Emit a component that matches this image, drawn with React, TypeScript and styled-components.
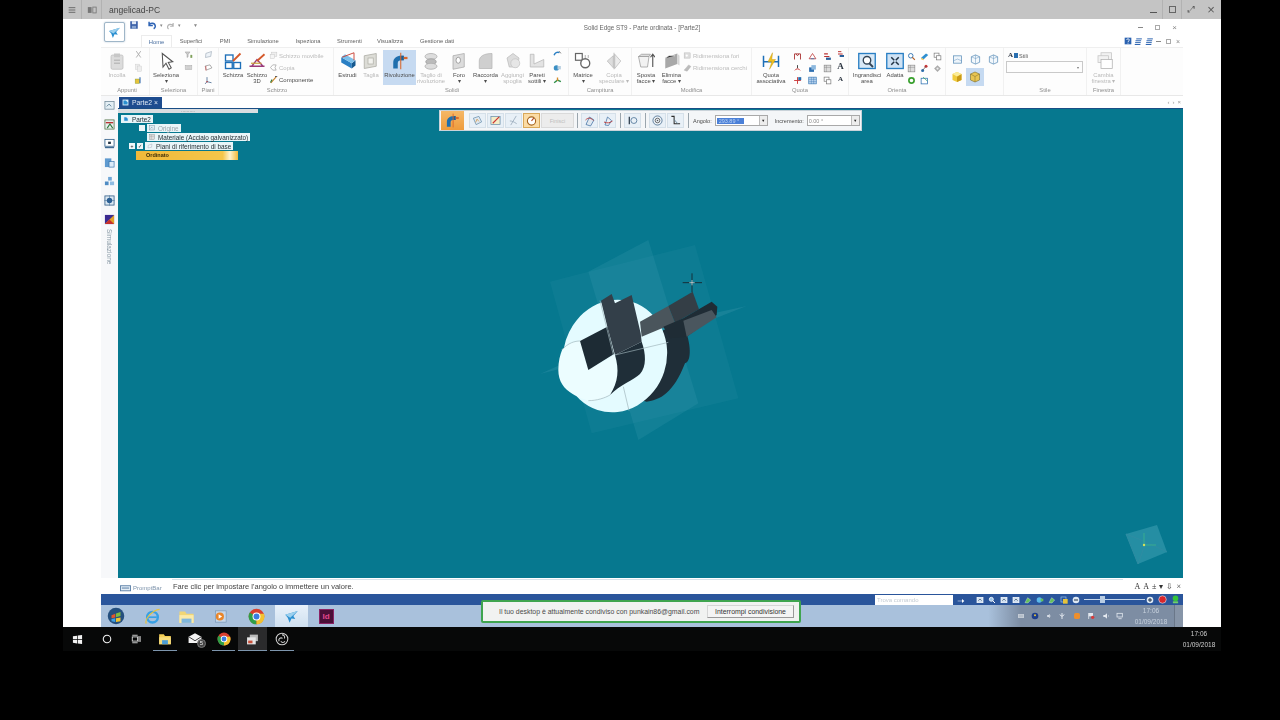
import { ReactNode } from 'react';
import styled, { createGlobalStyle } from 'styled-components';

const GlobalStyle = createGlobalStyle`
* { box-sizing: border-box; }
html, body { margin: 0; padding: 0; background: #000; }
body { width: 1280px; height: 720px; overflow: hidden; font-family: "Liberation Sans", Arial, sans-serif; }
`;

const glyphs: Record<string, ReactNode> = {
  clipboard: <><rect x="4" y="4" width="16" height="19" rx="2" fill="#dcdcdc" stroke="#bcbcbc" /><rect x="8" y="2" width="8" height="5" fill="#c8c8c8" /><path d="M8 11h8M8 15h8" stroke="#bbb" strokeWidth="2" /></>,
  scissors: <path d="M6 3l12 17M18 3L6 20" stroke="#aaa" strokeWidth="2.4" fill="none" />,
  copy: <><rect x="4" y="3" width="11" height="14" fill="#eee" stroke="#c4c4c4" /><rect x="9" y="8" width="11" height="14" fill="#eee" stroke="#c4c4c4" /></>,
  brush: <><rect x="3" y="8" width="12" height="12" fill="#e6c33a" stroke="#7a9a3a" /><path d="M16 3v16" stroke="#3a6fb0" strokeWidth="3" /></>,
  cursor: <path d="M7 2l1 18 4-5 4 8 3-2-4-7 6-1z" fill="#fff" stroke="#555" strokeWidth="1.4" />,
  selectA: <><path d="M3 5h13l-5 7v6l-3 2v-8z" fill="#ccc" stroke="#888" /><path d="M17 13h5v8h-5z" fill="#7fa05a" /></>,
  selectB: <><rect x="3" y="6" width="18" height="12" fill="#ddd" stroke="#999" /><path d="M6 10h12M6 14h12" stroke="#aaa" /></>,
  planeA: <path d="M5 9l15-5-2 13-14 3z" fill="#eef3f8" stroke="#8a9aa8" strokeWidth="1.4" />,
  planeB: <><path d="M3 8l13-3 5 8-15 6z" fill="#fff" stroke="#666" strokeWidth="1.4" /><path d="M5 8v12" stroke="#c33" strokeWidth="1.6" /></>,
  planeC: <><path d="M8 3v12l-5 6M8 15l12 3" stroke="#3a5f8a" strokeWidth="2" fill="none" /><circle cx="8" cy="15" r="2" fill="#b33" /></>,
  sketch: <><rect x="2" y="4" width="10" height="8" fill="#fff" stroke="#1d6fb8" strokeWidth="1.8" /><rect x="2" y="14" width="9" height="8" fill="#fff" stroke="#1d6fb8" strokeWidth="1.8" /><rect x="13" y="14" width="9" height="8" fill="#fff" stroke="#1d6fb8" strokeWidth="1.8" /><path d="M12 12L22 2" stroke="#d4582a" strokeWidth="2.4" /></>,
  sketch3d: <><path d="M2 19h20M5 19l7-9 8 9" stroke="#9a3a7a" strokeWidth="1.8" fill="none" /><path d="M4 15h14" stroke="#c9a23a" strokeWidth="1.6" /><path d="M12 12L22 3" stroke="#d4582a" strokeWidth="2.4" /></>,
  sketchMove: <><rect x="7" y="3" width="14" height="11" fill="#eee" stroke="#bbb" /><rect x="3" y="9" width="12" height="11" fill="#f4f4f4" stroke="#bbb" /></>,
  sketchCopy: <path d="M4 12l6-7h9l-3 7 3 7h-9z" fill="#fff" stroke="#999" strokeWidth="1.8" />,
  component: <><path d="M5 21L19 5" stroke="#c9822a" strokeWidth="3" /><path d="M4 20l4-8" stroke="#2f7a3a" strokeWidth="3" /><path d="M16 4h6" stroke="#333" strokeWidth="2" /></>,
  extrude: <><path d="M3 7l14 8v7L3 14z" fill="#2a7fc4" /><path d="M17 15l5-4v7l-5 4z" fill="#15598f" /><path d="M3 7l5-4 14 8-5 4z" fill="#7cc0ea" /><path d="M4 7L20 1M20 1v10" stroke="#c63b2e" strokeWidth="1.2" fill="none" /></>,
  cut: <><path d="M3 5l16-3v17L3 22z" fill="#dcdcd6" stroke="#a8a8a0" /><rect x="8" y="8" width="7" height="8" fill="#f2f2ee" stroke="#b0b0a8" /></>,
  revolve: <><path d="M3 22v-8c0-6 5-9 10-9h4v6h-4c-2 0-4 1-4 4v7z" fill="#1f6fae" /><path d="M13 5h4v6h-4z" fill="#1b5f96" /><path d="M13 1v22" stroke="#d9662a" strokeWidth="1.4" /><path d="M17 8h5" stroke="#d9662a" strokeWidth="3" /></>,
  revolveCut: <><ellipse cx="12" cy="6" rx="8" ry="4" fill="#ddd" stroke="#aaa" /><ellipse cx="12" cy="13" rx="7" ry="4" fill="#bbb" stroke="#999" /><ellipse cx="12" cy="19" rx="8" ry="4" fill="#ddd" stroke="#aaa" /></>,
  hole: <><path d="M4 5l15-3v18L4 23z" fill="#dcdcdc" stroke="#aaa" /><ellipse cx="11" cy="11" rx="3" ry="4" fill="#fff" stroke="#888" /></>,
  round: <path d="M3 22V12C3 6 9 2 20 2v20z" fill="#cfcfcf" stroke="#b5b5b5" />,
  draft: <><path d="M4 8l8-6 8 6-2 12H7z" fill="#ddd" stroke="#bbb" /><circle cx="15" cy="15" r="6" fill="#e6e6e6" stroke="#c4c4c4" /></>,
  thin: <path d="M3 3h5v13l13-6v10H3z" fill="#e3e3e3" stroke="#b5b5b5" />,
  twist: <><path d="M3 14c2-7 8-9 14-7" stroke="#2a7fc4" strokeWidth="4" fill="none" /><path d="M16 3l5 6" stroke="#555" strokeWidth="2" /></>,
  tubes: <><circle cx="9" cy="13" r="7" fill="#3a8fc4" /><path d="M12 8h9v9h-9z" fill="#b9cfe0" /></>,
  helix: <><path d="M3 18l9-7 9 4" stroke="#2f8f4a" strokeWidth="3.6" fill="none" /><path d="M12 4v9" stroke="#d98a2a" strokeWidth="3.6" /></>,
  pattern: <><rect x="2" y="2" width="9" height="9" fill="#fff" stroke="#666" strokeWidth="1.6" /><circle cx="15" cy="15" r="6" fill="#fff" stroke="#666" strokeWidth="1.8" /><path d="M15 4v4M19 4v4" stroke="#999" /></>,
  mirror: <><path d="M3 12l8-7v16z" fill="#ddd" stroke="#bbb" /><path d="M13 3l8 9-8 10z" fill="#ececec" stroke="#bbb" /><path d="M12 1v22" stroke="#aaa" /></>,
  move: <><path d="M2 6h14l-2 14H5z" fill="#f2f2f2" stroke="#999" /><path d="M2 6l4-3h12l-2 3z" fill="#ddd" stroke="#999" /><path d="M21 20V4M18 7l3-4 3 4" stroke="#555" strokeWidth="1.5" fill="none" /></>,
  erase: <><path d="M3 8l16-6v14L3 22z" fill="#a8a8a8" /><path d="M19 2l3 3v13l-3-2z" fill="#d5d5d5" /><path d="M3 8l5-3h8" stroke="#eee" /></>,
  resizeA: <><rect x="3" y="5" width="16" height="14" fill="#ddd" stroke="#aaa" /><circle cx="10" cy="12" r="3" fill="#fff" /></>,
  resizeB: <path d="M3 19L15 5l6 4-10 13z" fill="#bcbcbc" stroke="#aaa" />,
  quota: <><path d="M2 5v15M22 5v15M2 13h20" stroke="#1d6fb8" strokeWidth="2" /><path d="M14 1L8 13h5l-3 10 8-13h-5z" fill="#f0c020" stroke="#c79a10" strokeWidth=".6" /></>,
  dimA: <path d="M4 20V5h16v15M8 5l4 5 4-5" stroke="#a33" strokeWidth="2.4" fill="none" />,
  dimB: <><path d="M5 17a8 8 0 0114 0" stroke="#c33" strokeWidth="2.4" fill="none" /><path d="M12 3v8" stroke="#333" strokeWidth="2.4" /></>,
  dimC: <><path d="M12 3v18M3 12h18" stroke="#c33" strokeWidth="2.4" /><rect x="14" y="3" width="8" height="8" fill="#2a6fb0" /></>,
  dimD: <><path d="M3 18L12 4l9 14z" fill="#fff" stroke="#b33" strokeWidth="2" /><path d="M7 18h10" stroke="#2a6fb0" strokeWidth="2" /></>,
  dimE: <><rect x="3" y="9" width="13" height="12" fill="#2f6fb0" /><rect x="9" y="3" width="12" height="12" fill="#8cb8de" /></>,
  dimF: <><rect x="2" y="3" width="20" height="18" fill="#b9d3ee" stroke="#2a6fb0" strokeWidth="1.6" /><path d="M2 9h20M2 15h20M9 3v18M15 3v18" stroke="#2a6fb0" /></>,
  dimH: <><path d="M3 5h10M3 12h14" stroke="#b33" strokeWidth="3" /><rect x="8" y="15" width="13" height="6" fill="#2a5f9a" /></>,
  zoomArea: <><rect x="1" y="2" width="22" height="20" fill="#d8e8f6" stroke="#2a7fc4" strokeWidth="1.8" /><circle cx="12" cy="11" r="5" fill="#fff" stroke="#345" strokeWidth="1.8" /><path d="M15 15l5 5" stroke="#345" strokeWidth="2.4" /></>,
  fit: <><rect x="1" y="2" width="22" height="20" fill="#cfe2f4" stroke="#2a7fc4" strokeWidth="1.8" /><path d="M7 7l4 4M17 7l-4 4M7 17l4-4M17 17l-4-4" stroke="#234" strokeWidth="2" /></>,
  lens: <><circle cx="10" cy="10" r="6" fill="#fff" stroke="#2a6fb0" strokeWidth="2.4" /><path d="M14 14l7 7" stroke="#b5622a" strokeWidth="3" /></>,
  slab: <><path d="M3 15l13-11 6 4-12 11z" fill="#2f8fd0" /><path d="M3 15l7 4v3l-7-3z" fill="#f0c040" /></>,
  frames: <><rect x="3" y="3" width="13" height="11" fill="#fff" stroke="#777" strokeWidth="1.8" /><rect x="9" y="10" width="12" height="11" fill="#fff" stroke="#777" strokeWidth="1.8" /></>,
  mapA: <><rect x="3" y="3" width="18" height="18" fill="#ddd" stroke="#777" strokeWidth="1.4" /><path d="M3 9h18M9 3v18" stroke="#777" /></>,
  mapB: <><circle cx="7" cy="17" r="4" fill="#2a6fb0" /><circle cx="16" cy="6" r="4" fill="#c33" /><path d="M7 17L16 6" stroke="#555" strokeWidth="2" /></>,
  diamond: <><path d="M12 3l9 9-9 9-9-9z" fill="#aaa" /><circle cx="12" cy="12" r="3" fill="#eee" /></>,
  spin: <path d="M5 12a7 7 0 1114 0 7 7 0 01-14 0z" fill="none" stroke="#39a02e" strokeWidth="4.4" />,
  note: <><rect x="3" y="6" width="17" height="15" fill="#fff" stroke="#2a6fb0" strokeWidth="2" /><path d="M8 3l11 10" stroke="#3a6" strokeWidth="2" /></>,
  viewA: <><rect x="3" y="4" width="18" height="16" fill="#eef5fb" stroke="#5a8db8" strokeWidth="1.6" /><path d="M3 15l9-4 9 4" stroke="#5a8db8" fill="none" /></>,
  viewB: <><path d="M12 2l9 4v12l-9 4-9-4V6z" fill="#f3f8fc" stroke="#5a8db8" strokeWidth="1.6" /><path d="M12 2v20M3 6l9 4 9-4" stroke="#5a8db8" fill="none" /></>,
  cubeGold: <><path d="M12 2l9 4v12l-9 4-9-4V6z" fill="#f0cb3c" /><path d="M12 11l9-5v12l-9 4z" fill="#c99a18" /><path d="M3 6l9-4 9 4-9 5z" fill="#fbec9a" /></>,
  cubeLine: <><path d="M12 2l9 4v12l-9 4-9-4V6z" fill="#e9c550" stroke="#7a6b2a" strokeWidth="1.2" /><path d="M12 11v11M3 6l9 5 9-5" stroke="#7a6b2a" fill="none" /></>,
  windows: <><rect x="8" y="1" width="14" height="9" fill="#f2f2f2" stroke="#c4c4c4" /><rect x="4" y="5" width="14" height="9" fill="#f2f2f2" stroke="#c4c4c4" /><rect x="8" y="10" width="15" height="12" fill="#fff" stroke="#b0b0b0" /></>,
  appLogo: <><path d="M2 9l20-6-7 8 3 5-6-1-3 7-3-8z" fill="#2a8fd0" /><path d="M2 9l8 5 12-11z" fill="#9cd0ee" /></>,
  save: <><rect x="3" y="3" width="18" height="18" fill="#3a5fa8" /><rect x="7" y="3" width="10" height="7" fill="#dfe8f4" /><rect x="7" y="14" width="10" height="7" fill="#8aa5cf" /></>,
  undo: <path d="M5 4v9h9M5 12c3-6 14-6 15 3 0 3-2 5-4 6" stroke="#2f64b5" strokeWidth="3.6" fill="none" />,
  redo: <path d="M19 5v9h-8M19 13c-3-6-14-6-15 3 0 2 1 4 3 5" stroke="#b5b5b5" strokeWidth="3.2" fill="none" />,
  help: <><rect x="2" y="2" width="20" height="20" fill="#2a62b0" /><path d="M8 9c0-5 8-5 8 0 0 3-4 3-4 6M12 17v3" stroke="#fff" strokeWidth="2.4" fill="none" /></>,
  lines: <path d="M6 5h15M4 10h15M3 15h15M2 20h15" stroke="#2a62b0" strokeWidth="2.6" />,
  part: <><rect x="2" y="2" width="20" height="20" fill="#dbeefa" /><path d="M5 5h8l6 6v8H5z" fill="#2a8fd0" /></>,
  railA: <><rect x="2" y="3" width="20" height="17" fill="#e3eef4" stroke="#6a8494" strokeWidth="1.6" /><path d="M6 14l5-5 5 5" stroke="#5b7f95" strokeWidth="2" fill="none" /></>,
  railB: <><rect x="2" y="2" width="20" height="20" fill="#e7eef0" stroke="#4a6a3a" strokeWidth="1.6" /><path d="M4 8h16" stroke="#b33" strokeWidth="3" /><path d="M7 20l6-9 6 9" stroke="#2f7a3a" strokeWidth="2.4" fill="none" /></>,
  railC: <><rect x="2" y="3" width="20" height="15" fill="#fff" stroke="#2f5f8a" strokeWidth="1.8" /><path d="M2 21h20" stroke="#2f5f8a" strokeWidth="2.4" /><rect x="9" y="8" width="6" height="5" fill="#234" /></>,
  railD: <><rect x="2" y="3" width="14" height="19" fill="#5f9ad0" /><rect x="11" y="10" width="11" height="12" fill="#dcebf7" stroke="#2f6fa8" strokeWidth="1.4" /></>,
  railE: <><rect x="9" y="2" width="8" height="8" fill="#6fa6d6" /><rect x="2" y="12" width="8" height="8" fill="#4f8cc4" /><rect x="13" y="12" width="9" height="8" fill="#8fbce2" /></>,
  railF: <><rect x="2" y="2" width="20" height="20" fill="#dbe8f2" stroke="#35618a" strokeWidth="1.8" /><circle cx="12" cy="12" r="6" fill="#2a5f96" /><path d="M12 1v22M1 12h22" stroke="#35618a" /></>,
  railG: <><rect x="2" y="2" width="20" height="20" fill="#3a2a90" /><path d="M2 22L22 2v20z" fill="#e0a02a" /><path d="M2 22l10-10 10 10z" fill="#c62e2e" /></>,
  plane3d: <><path d="M3 7l12-4 6 12-12 6z" fill="#dfe8f0" stroke="#5f87a8" strokeWidth="1.5" /><path d="M8 16l3-7 4 5" stroke="#d08a2a" strokeWidth="1.4" fill="none" /></>,
  pencil: <><rect x="2" y="3" width="20" height="18" fill="#f3edc8" stroke="#5f87a8" strokeWidth="1.5" /><path d="M6 18L20 4" stroke="#c33" strokeWidth="2.4" /></>,
  stair: <path d="M6 22L18 2M4 13c5 0 9 2 15 6" stroke="#9ab" strokeWidth="1.8" fill="none" />,
  gauge: <><circle cx="12" cy="13" r="9" fill="#fff" stroke="#a5651f" strokeWidth="2.4" /><path d="M12 13l5-6" stroke="#b5481f" strokeWidth="2.4" /></>,
  rotA: <><path d="M4 19l7-15 9 6-7 12z" fill="#dfe8f0" stroke="#4a77a8" strokeWidth="1.6" /><path d="M3 10c5-5 10-5 16 1" stroke="#b53a3a" strokeWidth="1.8" fill="none" /></>,
  rotB: <><path d="M6 20l5-16 8 7-6 10z" fill="#ecf1f6" stroke="#4a77a8" strokeWidth="1.6" /><path d="M4 14c6 3 12 2 17-2" stroke="#b53a3a" strokeWidth="1.8" fill="none" /></>,
  axis: <><path d="M5 4v16" stroke="#234" strokeWidth="2.6" /><circle cx="15" cy="12" r="6.5" fill="none" stroke="#4d7396" strokeWidth="1.8" /></>,
  target: <><circle cx="12" cy="12" r="10" fill="none" stroke="#4d6f8f" strokeWidth="1.8" /><circle cx="12" cy="12" r="5" fill="none" stroke="#555" strokeWidth="1.8" /><circle cx="12" cy="12" r="1.6" fill="#555" /></>,
  profile: <><path d="M3 3h6v16h13" fill="none" stroke="#2b2b2b" strokeWidth="2.2" /><path d="M9 10l8 9" stroke="#5b7f95" strokeWidth="1.8" /></>,
  prompt: <><rect x="1" y="6" width="22" height="11" fill="#e4eef6" stroke="#5a7ea6" strokeWidth="2" /><path d="M4 11h16" stroke="#5a7ea6" strokeWidth="2.2" /></>,
  arrow: <path d="M2 14h13V9l7 6-7 6v-5H2z" fill="#fff" />,
  tinyBlue: <><rect x="3" y="4" width="18" height="16" fill="#cfe0f2" stroke="#fff" strokeWidth="2" /><path d="M7 14l5-5 5 5" stroke="#345" strokeWidth="2" fill="none" /></>,
  tinyLens: <><circle cx="10" cy="10" r="6" fill="#9cc6ec" stroke="#fff" strokeWidth="2.4" /><path d="M14 14l7 7" stroke="#fff" strokeWidth="3" /></>,
  tinyGreen: <path d="M3 20l8-15 9 7-8 9z" fill="#63c05a" stroke="#fff" />,
  tinyGlobe: <><circle cx="10" cy="12" r="8" fill="#5ab8ea" /><path d="M14 8h8v8h-8z" fill="#63c05a" /></>,
  tinyBox: <><rect x="3" y="3" width="15" height="15" fill="none" stroke="#9cc6ec" strokeWidth="2" /><rect x="9" y="9" width="14" height="14" fill="#e6c33a" /></>,
  minus: <><circle cx="12" cy="12" r="10" fill="#dde8f4" /><path d="M6 12h12" stroke="#234" strokeWidth="3" /></>,
  plus: <><circle cx="12" cy="12" r="10" fill="#dde8f4" /><path d="M6 12h12M12 6v12" stroke="#234" strokeWidth="3" /></>,
  red: <circle cx="12" cy="12" r="10" fill="#d8262c" stroke="#e5e9f2" strokeWidth="1.6" />,
  green: <><circle cx="12" cy="9" r="7.5" fill="#35c43a" /><rect x="5" y="17" width="14" height="5" fill="#6fd06a" /></>,
  orb: <><circle cx="12" cy="12" r="11" fill="#244f7e" /><path d="M6 11l5-2v5l-5 1z" fill="#e2572b" /><path d="M12 8.5l6-2V12l-6 1.5z" fill="#7fbb3f" /><path d="M6 16l5-1v5l-5-1z" fill="#3fa0e2" /><path d="M12 15l6-1v5l-6 1z" fill="#f0c330" /></>,
  ie: <><circle cx="12" cy="13" r="7.5" fill="none" stroke="#37a0e6" strokeWidth="3.4" /><path d="M6 13h12" stroke="#37a0e6" strokeWidth="2.4" /><path d="M3 22C1 15 12 3 22 2" stroke="#e9c23a" strokeWidth="1.6" fill="none" /></>,
  folder: <><path d="M2 5h8l2 3h10v13H2z" fill="#f1d675" /><rect x="2" y="10" width="20" height="11" fill="#fbeaa8" /><rect x="5" y="15" width="14" height="6" fill="#7fb6dd" /></>,
  media: <><rect x="4" y="3" width="17" height="18" fill="#c5d6e8" stroke="#7393b5" /><circle cx="11" cy="12" r="6.5" fill="#e8852a" /><path d="M9 8.5l5.5 3.5L9 15.5z" fill="#fff" /></>,
  chrome: <><circle cx="12" cy="12" r="11" fill="#d9402e" /><path d="M12 12L2.4 6.5A11 11 0 0012 23z" fill="#2f9e47" /><path d="M12 12v11A11 11 0 0022.5 8H12z" fill="#f3c22f" /><circle cx="12" cy="12" r="5.6" fill="#fff" /><circle cx="12" cy="12" r="4.2" fill="#3b7de0" /></>,
  winLogo: <path d="M2 5l9-1.4V11.5H2zM12.5 3.400L22 2v9.5h-9.500zM2 13h9v7.5L2 19zM12.5 13H22v9l-9.500-1.400z" fill="#f2f2f2" />,
  ring: <circle cx="12" cy="12" r="9" fill="none" stroke="#f2f2f2" strokeWidth="2.6" />,
  taskview: <><rect x="3" y="7" width="13" height="10" fill="none" stroke="#eee" strokeWidth="2" /><path d="M19 5v14M22 5v14M3 3h13M3 21h13" stroke="#eee" strokeWidth="2" /></>,
  explorer: <><path d="M2 4h8l2 3h10v14H2z" fill="#f2cd55" /><rect x="2" y="9" width="20" height="12" fill="#f6dc7c" /><rect x="7" y="14" width="10" height="7" fill="#4c9ed6" /></>,
  mail: <><path d="M1 8l11-6 11 6v11H1z" fill="#f3f3f3" /><path d="M1 8l11 7 11-7" stroke="#333" strokeWidth="1.6" fill="none" /></>,
  gallery: <><rect x="7" y="3" width="15" height="12" fill="#bbb" /><rect x="2" y="8" width="16" height="13" fill="#e6e6e6" /><rect x="4" y="14" width="8" height="5" fill="#c9503a" /></>,
  obs: <><circle cx="12" cy="12" r="10" fill="none" stroke="#cfcfcf" strokeWidth="1.8" /><path d="M12 5a4 4 0 014 6M7 16a4 4 0 016-5M17 16a4 4 0 01-7 0" stroke="#cfcfcf" strokeWidth="1.8" fill="none" /></>,
  menu: <path d="M2 5h20M2 12h20M2 19h20" stroke="#555" strokeWidth="2.4" />,
  viewerSwap: <><rect x="2" y="5" width="9" height="14" fill="#777" /><rect x="14" y="5" width="8" height="14" fill="none" stroke="#777" strokeWidth="2" /></>,
  traySmall: <><rect x="3" y="6" width="18" height="12" fill="#c4ccd6" /><path d="M6 10h12M6 14h12" stroke="#8c98a6" /></>,
  trayBlue: <><circle cx="12" cy="12" r="10" fill="#1f3f8a" /><circle cx="12" cy="10" r="3" fill="#e6c33a" /></>,
  trayOrange: <rect x="3" y="3" width="18" height="18" rx="5" fill="#ef8f2c" />,
  trayFlag: <><path d="M5 3v18" stroke="#e3e8ef" strokeWidth="2.4" /><path d="M5 3h13v10H5z" fill="#e3e8ef" /><circle cx="17" cy="16" r="5" fill="#d83a3a" /></>,
  traySound: <path d="M4 9h5l6-5v16l-6-5H4zM18 8c2 2 2 6 0 8" fill="#e3e8ef" />,
  trayNet: <><rect x="3" y="4" width="16" height="11" fill="none" stroke="#e3e8ef" strokeWidth="2.4" /><path d="M7 20h10" stroke="#e3e8ef" strokeWidth="2.4" /></>,
  trayUsb: <path d="M12 3v18M5 8l7 5 7-5" stroke="#e3e8ef" strokeWidth="3" fill="none" />,
};

const Svg = styled.svg<{ $size: number; $faded?: boolean }>`
display: block;
flex: none;
width: ${(p) => p.$size}px;
height: ${(p) => p.$size}px;
opacity: ${(p) => (p.$faded ? 0.55 : 1)};
`;

function Glyph({ name, size = 9, faded }: { name: string, size?: number, faded?: boolean }) {
  return <Svg $size={size} $faded={faded} viewBox="0 0 24 24">{glyphs[name]}</Svg>;
}

const Screen = styled.div`
margin-left: 63px;
width: 1158px;
height: 651px;
display: flex;
flex-direction: column;
filter: blur(0.5px);
`;

const ViewerBar = styled.div`
height: 19px;
flex: none;
background: #c4c4c4;
display: flex;
align-items: center;
`;

const ViewerCell = styled.div<{ $w: number, $line?: boolean }>`
width: ${(p) => p.$w}px;
height: 19px;
flex: none;
display: flex;
align-items: center;
justify-content: center;
border-right: ${(p) => (p.$line ? '1px solid #b2b2b2' : 'none')};
color: #5a5a5a;
font-size: 13px;
`;

const ResizeCell = styled(ViewerCell)`
font-size: 9px;
`;

const ViewerName = styled.div`
flex: 1;
padding-left: 7px;
font-size: 8.5px;
color: #444;
`;

const MinLine = styled.span`
width: 7px;
height: 1px;
margin-top: 5px;
background: #555;
`;

const MaxBox = styled.span`
width: 7px;
height: 7px;
border: 1px solid #666;
`;

const Desktop = styled.div`
position: relative;
height: 608px;
flex: none;
display: flex;
background: #fff;
padding: 0 38px;
`;

const AppWindow = styled.div`
width: 1082px;
display: flex;
flex-direction: column;
position: relative;
background: #fff;
`;

const TitleRow = styled.div`
height: 16px;
flex: none;
display: grid;
grid-template-columns: 1fr auto 1fr;
align-items: center;
`;

const QuickAccess = styled.div`
display: flex;
align-items: center;
gap: 3px;
padding: 0 0 4px 28px;
color: #888;
font-size: 5px;
`;

const QuickGap = styled.span<{ $w: number }>`
width: ${(p) => p.$w}px;
`;

const Title = styled.div`
font-size: 6.3px;
color: #666;
`;

const CloseSet = styled.div`
display: flex;
justify-content: flex-end;
align-items: center;
gap: 12px;
padding: 0 6px 0 0;
color: #888;
font-size: 8px;
`;

const MiniCloseSet = styled.div`
display: flex;
align-items: center;
gap: 5px;
color: #888;
font-size: 7px;
`;

const SmallMin = styled.span`
width: 5px;
height: 1px;
background: #888;
`;

const SmallRestore = styled.span`
width: 5px;
height: 5px;
border: 1px solid #aaa;
`;

const AppButton = styled.div`
position: absolute;
left: 3px;
top: 3px;
width: 21px;
height: 20px;
background: #fff;
border: 1px solid #9fb6c8;
border-radius: 2px;
display: flex;
align-items: center;
justify-content: center;
box-shadow: 0 0 2px #b5c5d4;
`;

const TabRow = styled.div`
height: 12px;
flex: none;
display: flex;
align-items: stretch;
padding-left: 40px;
`;

const Tab = styled.div<{ $w: number, $active?: boolean }>`
width: ${(p) => p.$w}px;
display: flex;
align-items: center;
justify-content: center;
font-size: 5.8px;
color: #5f5f5f;
background: #fff;
${(p) => p.$active && 'border: 1px solid #ececec; border-bottom: none; color: #4a6fa0;'}
`;

const HelpSet = styled.div`
margin-left: auto;
display: flex;
align-items: center;
gap: 2px;
padding-right: 3px;
`;

const Ribbon = styled.div`
height: 49px;
flex: none;
display: flex;
border-top: 1px solid #efefef;
border-bottom: 1px solid #e8e8e8;
background: #fdfdfd;
`;

const Group = styled.div<{ $w: number, $pad?: number }>`
width: ${(p) => p.$w}px;
flex: none;
display: flex;
flex-direction: column;
padding-left: ${(p) => p.$pad ?? 0}px;
border-right: 1px solid #f1f1f1;
`;

const GroupBody = styled.div`
height: 38px;
flex: none;
display: flex;
align-items: flex-start;
padding-top: 2px;
`;

const GroupLabel = styled.div`
height: 8px;
text-align: center;
font-size: 5.8px;
line-height: 8px;
color: #8d8d8d;
`;

const BigTool = styled.div<{ $w: number, $off?: boolean, $active?: boolean }>`
width: ${(p) => p.$w}px;
height: 35px;
flex: none;
display: flex;
flex-direction: column;
align-items: center;
padding-top: 2px;
gap: 2px;
font-size: 5.9px;
line-height: 6px;
text-align: center;
color: ${(p) => (p.$off ? '#b9b9b9' : '#4c4c4c')};
background: ${(p) => (p.$active ? '#c6daf1' : 'transparent')};
`;

const SmallColumn = styled.div<{ $w: number }>`
width: ${(p) => p.$w}px;
flex: none;
display: flex;
flex-direction: column;
align-items: center;
gap: 4px;
`;

const LabelColumn = styled.div<{ $w: number }>`
width: ${(p) => p.$w}px;
flex: none;
display: flex;
flex-direction: column;
gap: 3px;
padding-top: 1px;
`;

const LabelTool = styled.div<{ $off?: boolean }>`
display: flex;
align-items: center;
gap: 1px;
font-size: 6px;
color: ${(p) => (p.$off ? '#bcbcbc' : '#4c4c4c')};
white-space: nowrap;
`;

const IconGrid = styled.div<{ $cols: number, $cell: number, $row?: number }>`
display: grid;
grid-template-columns: repeat(${(p) => p.$cols}, ${(p) => p.$cell}px);
grid-auto-rows: ${(p) => p.$row ?? 12}px;
justify-items: center;
align-items: center;
flex: none;
`;

const ViewCell = styled.div<{ $active?: boolean }>`
width: 18px;
height: 18px;
display: flex;
align-items: center;
justify-content: center;
background: ${(p) => (p.$active ? '#c6daf1' : 'transparent')};
`;

const FontIcon = styled.span<{ $size: number }>`
font-family: "Liberation Serif", serif;
font-weight: 700;
font-size: ${(p) => p.$size}px;
line-height: 9px;
height: 9px;
color: #2b3440;
`;

const StyleColumn = styled.div`
flex: 1;
display: flex;
flex-direction: column;
gap: 1px;
padding: 1px 3px 0 2px;
font-size: 5.5px;
color: #555;
`;

const StyleName = styled.div`
display: flex;
align-items: center;
gap: 1px;
padding-left: 2px;
`;

const StyleSwatch = styled.span`
width: 4px;
height: 5px;
background: #2a6fb0;
`;

const StyleSelect = styled.div`
height: 12px;
border: 1px solid #c9c9c9;
display: flex;
align-items: center;
justify-content: flex-end;
padding-right: 3px;
color: #777;
font-size: 4px;
`;

const Main = styled.div`
flex: 1;
min-height: 0;
display: flex;
`;

const Rail = styled.div`
width: 17px;
flex: none;
display: flex;
flex-direction: column;
align-items: center;
padding-top: 4px;
gap: 8px;
background: #f7f8fa;
`;

const RailText = styled.div`
writing-mode: vertical-rl;
font-size: 6.5px;
color: #8a9aa6;
margin-top: -4px;
`;

const Workspace = styled.div`
flex: 1;
min-width: 0;
display: flex;
flex-direction: column;
`;

const DocRow = styled.div`
height: 13px;
flex: none;
display: flex;
align-items: flex-end;
justify-content: space-between;
padding-left: 1px;
border-bottom: 1px solid #1a4e86;
`;

const DocTab = styled.div`
width: 43px;
height: 11px;
background: #1d4c8f;
color: #dfe9f5;
font-size: 6.8px;
display: flex;
align-items: center;
gap: 3px;
padding-left: 3px;
white-space: nowrap;
`;

const DocArrows = styled.div`
display: flex;
align-items: center;
gap: 3px;
padding: 0 2px 3px 0;
color: #999;
font-size: 6px;
`;

const Viewport = styled.div`
position: relative;
flex: 1;
min-height: 0;
background: #06788f;
`;

const TreeGrip = styled.div`
position: absolute;
left: 0;
top: 0;
width: 140px;
height: 4px;
background: #d9dde0;
color: #777;
font-size: 5px;
line-height: 2px;
text-align: center;
`;

const Tree = styled.div`
position: absolute;
left: 3px;
top: 6px;
display: flex;
flex-direction: column;
gap: 0.5px;
`;

const TreeRow = styled.div<{ $indent: number }>`
height: 8.5px;
display: flex;
align-items: center;
gap: 2px;
padding-left: ${(p) => p.$indent}px;
`;

const TreeLabel = styled.div<{ $muted?: boolean }>`
height: 8px;
display: flex;
align-items: center;
gap: 3px;
padding: 0 2px;
background: #e9f5f8;
font-size: 6.4px;
white-space: nowrap;
color: ${(p) => (p.$muted ? '#9aa6ac' : '#1f2a30')};
`;

const TreeBox = styled.div`
width: 6px;
height: 6px;
background: #eef6f8;
color: #222;
font-size: 5px;
line-height: 6px;
text-align: center;
`;

const TreeActive = styled.div`
width: 102px;
height: 9px;
margin-left: 15px;
padding-left: 10px;
background: linear-gradient(90deg, #f0b93a 0, #f4c64a 85%, #fdf3cf 92%, #f0b93a 100%);
font-size: 5.5px;
font-weight: 700;
line-height: 9px;
color: #3c2c06;
`;

const CommandBar = styled.div`
position: absolute;
left: 321px;
top: 1px;
width: 423px;
height: 21px;
background: #f4f6f8;
border: 1px solid #c9d2d9;
display: flex;
align-items: center;
padding-left: 1px;
font-size: 5.5px;
color: #4a4a4a;
`;

const CommandMain = styled.div`
width: 23px;
height: 19px;
flex: none;
display: flex;
align-items: center;
justify-content: center;
background: linear-gradient(#f5b867, #ee9b3c);
margin-right: 5px;
`;

const CommandTool = styled.div<{ $hot?: boolean }>`
width: 17px;
height: 15px;
flex: none;
margin-right: 1px;
display: flex;
align-items: center;
justify-content: center;
border: 1px solid ${(p) => (p.$hot ? '#d9a95a' : '#d5e0e9')};
background: ${(p) => (p.$hot ? '#fbdca6' : '#e8f0f7')};
`;

const FinishButton = styled.div`
width: 33px;
height: 15px;
flex: none;
display: flex;
align-items: center;
justify-content: center;
background: #ececec;
border: 1px solid #dadada;
color: #bdbdbd;
`;

const CommandSep = styled.div`
width: 1px;
height: 15px;
flex: none;
margin: 0 3px;
background: #9aa5ad;
`;

const FieldLabel = styled.div`
flex: none;
padding: 0 3px 0 1px;
white-space: nowrap;
`;

const FieldSelect = styled.div`
width: 53px;
height: 11px;
flex: none;
margin-right: 6px;
background: #fff;
border: 1px solid #a9a9a9;
display: flex;
align-items: center;
justify-content: space-between;
padding-left: 1px;
color: #8b8b8b;
`;

const SelectedValue = styled.span`
background: #4a80d8;
color: #bcd2f2;
padding: 0 5px 0 2px;
`;

const FieldArrow = styled.span`
width: 8px;
height: 9px;
background: #ededed;
border-left: 1px solid #bbb;
color: #222;
font-size: 4px;
line-height: 9px;
text-align: center;
`;

const ModelSvg = styled.svg`
position: absolute;
left: 402px;
top: 121px;
width: 240px;
height: 215px;
`;

const TriadSvg = styled.svg`
position: absolute;
left: 1007px;
top: 416px;
width: 42px;
height: 40px;
`;

const PromptRow = styled.div`
height: 16px;
flex: none;
display: flex;
align-items: flex-end;
background: #fff;
padding-left: 19px;
`;

const PromptName = styled.div`
width: 52px;
height: 12px;
flex: none;
display: flex;
align-items: center;
gap: 2px;
font-size: 6px;
color: #7d93ab;
`;

const PromptInput = styled.div`
flex: 1;
height: 15px;
padding-left: 1px;
border-top: 1.5px solid #d6e2ea;
font-size: 7.5px;
line-height: 14px;
color: #444;
`;

const PromptTools = styled.div`
width: 60px;
height: 14px;
flex: none;
display: flex;
align-items: flex-start;
justify-content: flex-end;
gap: 3px;
padding-right: 2px;
color: #333;
font-size: 8px;
line-height: 14px;
font-family: "Liberation Serif", serif;
`;

const StatusBar = styled.div`
height: 11px;
flex: none;
display: flex;
align-items: center;
justify-content: flex-end;
gap: 4px;
padding-right: 3px;
background: #2a559b;
`;

const SearchField = styled.div`
width: 78px;
height: 10px;
flex: none;
background: #fff;
color: #c4ccd4;
font-size: 6px;
line-height: 10px;
padding-left: 2px;
`;

const StatusSpacer = styled.span`
width: 3px;
flex: none;
`;

const ZoomTrack = styled.div`
position: relative;
width: 61px;
height: 1px;
flex: none;
margin-right: -3px;
background: #c5d6ea;
`;

const ZoomThumb = styled.div`
position: absolute;
left: 16px;
top: -3px;
width: 5px;
height: 7px;
background: #b9cde3;
`;

const SevenBar = styled.div`
height: 22px;
flex: none;
display: flex;
align-items: center;
background: linear-gradient(90deg, #a9c1dc 0, #a9c1dc 82%, #7d8da3 85%, #7d8da3 100%);
`;

const SevenItem = styled.div<{ $w: number, $active?: boolean }>`
width: ${(p) => p.$w}px;
height: 22px;
flex: none;
display: flex;
align-items: center;
justify-content: center;
background: ${(p) => (p.$active ? 'linear-gradient(#e8f1fa, #cfe0f0)' : 'transparent')};
`;

const IdBadge = styled.div`
width: 15px;
height: 15px;
background: #4a0f37;
border: 1px solid #8a2364;
color: #e0488f;
font-size: 8px;
font-weight: 700;
line-height: 13px;
text-align: center;
`;

const SevenTray = styled.div`
margin-left: auto;
display: flex;
align-items: center;
height: 22px;
`;

const TrayIcons = styled.div`
display: flex;
align-items: center;
gap: 6.5px;
margin-right: 4px;
`;

const SevenClock = styled.div`
width: 46px;
font-size: 6.5px;
line-height: 11px;
text-align: center;
color: #c8d2de;
`;

const ShowDesktop = styled.div`
width: 9px;
height: 22px;
background: #8795a8;
border-left: 1px solid #6a7789;
`;

const TenBar = styled.div`
height: 24px;
flex: none;
display: flex;
align-items: center;
background: #070808;
`;

const TenItem = styled.div<{ $w: number, $line?: boolean, $active?: boolean }>`
position: relative;
width: ${(p) => p.$w}px;
height: 24px;
flex: none;
display: flex;
align-items: center;
justify-content: center;
background: ${(p) => (p.$active ? '#2b2b2c' : 'transparent')};
${(p) => p.$line && `
  &::after {
    content: '';
    position: absolute;
    left: ${p.$active ? 0 : 3}px;
    right: ${p.$active ? 0 : 3}px;
    bottom: 0;
    height: 1px;
    background: #7d95ad;
  }
`}
`;

const MailBadge = styled.span`
position: absolute;
right: 3px;
bottom: 3px;
width: 9px;
height: 9px;
border-radius: 50%;
background: #444;
border: 1px solid #777;
color: #eee;
font-size: 6px;
line-height: 7px;
text-align: center;
`;

const TenClock = styled.div`
margin-left: auto;
width: 44px;
font-size: 6.5px;
line-height: 11px;
text-align: center;
color: #cfcfcf;
`;

const ShareBanner = styled.div`
position: absolute;
left: 418px;
top: 581px;
width: 320px;
height: 23px;
display: flex;
align-items: center;
justify-content: space-between;
padding: 0 5px 0 16px;
background: #f1f2f1;
border: 2px solid #3fa44f;
border-radius: 2px;
font-size: 6.9px;
color: #4a4a4a;
`;

const ShareButton = styled.div`
width: 87px;
height: 13px;
display: flex;
align-items: center;
justify-content: center;
background: #f4f4f4;
border: 1px solid #d5d5d5;
border-right-color: #999;
border-bottom-color: #999;
color: #333;
`;

function Tool({ icon, size = 18, w, off, active, children }: { icon: string, size?: number, w: number, off?: boolean, active?: boolean, children: ReactNode }) {
  return (
    <BigTool $w={w} $off={off} $active={active}>
      <Glyph name={icon} size={size} />
      <div>{children}</div>
    </BigTool>
  );
}

function Icons({ cols, cell, names, size = 9 }: { cols: number, cell: number, names: string[], size?: number }) {
  return (
    <IconGrid $cols={cols} $cell={cell}>
      {names.map((name, i) => <Glyph key={`${name}${i}`} name={name} size={size} />)}
    </IconGrid>
  );
}

function Model() {
  return (
    <ModelSvg viewBox="0 0 720 645">
      <path d="M90 155L525 45l130 460-440 105z" fill="#4aa6ba" opacity=".11" />
      <path d="M205 125L385 30l150 490-180 110z" fill="#5ab0c2" opacity=".15" />
      <path d="M60 432L350 300l330-72-330 130z" fill="#7abfce" opacity=".15" />
      <path d="M430 300l60-15c25 55 25 110 5 115-35 90-75 110-115 115l-50-15z" fill="#1f2e38" />
      <ellipse cx="285" cy="378" rx="155" ry="170" transform="rotate(18 285 378)" fill="#e4fbff" />
      <path d="M127 358C150 338 170 333 180 333L205 420 285 375C298 420 295 455 270 495 250 505 225 515 205 512 150 495 115 470 115 420 115 395 120 375 127 358Z" fill="#ecfdff" />
      <path d="M285 375L365 335C378 370 380 410 360 432 340 450 300 465 270 495 295 455 298 420 285 375Z" fill="#1f2e38" />
      <path d="M180 333l82-43 20 82-77 48z" fill="#1d2b34" />
      <path d="M243 212l32-20 10 28 50-25 27 115 3 25-80 40-23-85z" fill="#333f49" />
      <path d="M360 275l85-47 20 50-100 42z" fill="#4a555c" />
      <path d="M445 228l73-43 19 53-72 40z" fill="#343e46" />
      <path d="M430 290l60-25 85-50 17 15-2 25-90 65-50 5z" fill="#1f2c35" />
      <path d="M490 272l85-32 15 22-90 58z" fill="#4a565e" />
      <path d="M240 212l40 163M310 470l17 72M125 360c20-22 40-27 55-27M285 375l160-38M205 512c25 0 50-8 65-17" stroke="#9fb3ba" strokeWidth="2" fill="none" />
      <path d="M516 130v56M488 158h58" stroke="#16303a" strokeWidth="3" />
      <path d="M516 150v16M508 158h16" stroke="#e8f4f6" strokeWidth="2" />
    </ModelSvg>
  );
}

function App() {
  return (
    <>
      <GlobalStyle />
      <Screen>
        <ViewerBar>
          <ViewerCell $w={19} $line><Glyph name="menu" size={8} /></ViewerCell>
          <ViewerCell $w={20} $line><Glyph name="viewerSwap" size={10} /></ViewerCell>
          <ViewerName>angelicad-PC</ViewerName>
          <ViewerCell $w={19} $line><MinLine /></ViewerCell>
          <ViewerCell $w={19} $line><MaxBox /></ViewerCell>
          <ResizeCell $w={19}>⤢</ResizeCell>
          <ViewerCell $w={20}>×</ViewerCell>
        </ViewerBar>
        <Desktop>
          <AppWindow>
            <AppButton><Glyph name="appLogo" size={13} /></AppButton>
            <TitleRow>
              <QuickAccess>
                <Glyph name="save" size={10} />
                <QuickGap $w={2} />
                <Glyph name="undo" size={10} />
                <span>▾</span>
                <Glyph name="redo" size={9} />
                <span>▾</span>
                <QuickGap $w={6} />
                <span>▼</span>
              </QuickAccess>
              <Title>Solid Edge ST9 - Parte ordinata - [Parte2]</Title>
              <CloseSet>
                <SmallMin />
                <SmallRestore />
                <span>×</span>
              </CloseSet>
            </TitleRow>
            <TabRow>
              <Tab $w={31} $active>Home</Tab>
              <Tab $w={38}>Superfici</Tab>
              <Tab $w={30}>PMI</Tab>
              <Tab $w={46}>Simulazione</Tab>
              <Tab $w={44}>Ispeziona</Tab>
              <Tab $w={39}>Strumenti</Tab>
              <Tab $w={42}>Visualizza</Tab>
              <Tab $w={52}>Gestione dati</Tab>
              <HelpSet>
                <Glyph name="help" size={8} />
                <Glyph name="lines" size={9} />
                <Glyph name="lines" size={9} />
                <MiniCloseSet>
                  <SmallMin />
                  <SmallRestore />
                  <span>×</span>
                </MiniCloseSet>
              </HelpSet>
            </TabRow>
            <Ribbon>
              <Group $w={49} $pad={4}>
                <GroupBody>
                  <Tool icon="clipboard" w={24} off>Incolla</Tool>
                  <SmallColumn $w={19}>
                    <Glyph name="scissors" />
                    <Glyph name="copy" />
                    <Glyph name="brush" />
                  </SmallColumn>
                </GroupBody>
                <GroupLabel>Appunti</GroupLabel>
              </Group>
              <Group $w={48}>
                <GroupBody>
                  <Tool icon="cursor" w={32}>Seleziona<br />▾</Tool>
                  <SmallColumn $w={13}>
                    <Glyph name="selectA" />
                    <Glyph name="selectB" />
                  </SmallColumn>
                </GroupBody>
                <GroupLabel>Seleziona</GroupLabel>
              </Group>
              <Group $w={21}>
                <GroupBody>
                  <SmallColumn $w={20}>
                    <Glyph name="planeA" />
                    <Glyph name="planeB" />
                    <Glyph name="planeC" />
                  </SmallColumn>
                </GroupBody>
                <GroupLabel>Piani</GroupLabel>
              </Group>
              <Group $w={115} $pad={2}>
                <GroupBody>
                  <Tool icon="sketch" w={24}>Schizza</Tool>
                  <Tool icon="sketch3d" w={24}>Schizzo<br />3D</Tool>
                  <LabelColumn $w={62}>
                    <LabelTool $off><Glyph name="sketchMove" />Schizzo movibile</LabelTool>
                    <LabelTool $off><Glyph name="sketchCopy" />Copia</LabelTool>
                    <LabelTool><Glyph name="component" />Componente</LabelTool>
                  </LabelColumn>
                </GroupBody>
                <GroupLabel>Schizzo</GroupLabel>
              </Group>
              <Group $w={235} $pad={2}>
                <GroupBody>
                  <Tool icon="extrude" w={23}>Estrudi</Tool>
                  <Tool icon="cut" w={24} off>Taglia</Tool>
                  <Tool icon="revolve" w={33} active>Rivoluzione</Tool>
                  <Tool icon="revolveCut" w={30} off>Taglio di<br />rivoluzione</Tool>
                  <Tool icon="hole" w={26}>Foro<br />▾</Tool>
                  <Tool icon="round" w={27}>Raccorda<br />▾</Tool>
                  <Tool icon="draft" w={27} off>Aggiungi<br />spoglia</Tool>
                  <Tool icon="thin" w={22}>Pareti<br />sottili ▾</Tool>
                  <SmallColumn $w={19}>
                    <Glyph name="twist" />
                    <Glyph name="tubes" />
                    <Glyph name="helix" />
                  </SmallColumn>
                </GroupBody>
                <GroupLabel>Solidi</GroupLabel>
              </Group>
              <Group $w={63}>
                <GroupBody>
                  <Tool icon="pattern" w={28}>Matrice<br />▾</Tool>
                  <Tool icon="mirror" w={34} off>Copia<br />speculare ▾</Tool>
                </GroupBody>
                <GroupLabel>Campitura</GroupLabel>
              </Group>
              <Group $w={120}>
                <GroupBody>
                  <Tool icon="move" w={28}>Sposta<br />facce ▾</Tool>
                  <Tool icon="erase" w={23}>Elimina<br />facce ▾</Tool>
                  <LabelColumn $w={68}>
                    <LabelTool $off><Glyph name="resizeA" />Ridimensiona fori</LabelTool>
                    <LabelTool $off><Glyph name="resizeB" />Ridimensiona cerchi</LabelTool>
                  </LabelColumn>
                </GroupBody>
                <GroupLabel>Modifica</GroupLabel>
              </Group>
              <Group $w={97}>
                <GroupBody>
                  <Tool icon="quota" w={38}>Quota<br />associativa</Tool>
                  <Icons cols={3} cell={15} names={['dimA', 'dimD', 'dimH', 'dimB', 'dimE', 'mapA', 'dimC', 'dimF', 'frames']} />
                  <SmallColumn $w={11}>
                    <Glyph name="dimH" size={8} />
                    <FontIcon $size={9}>A</FontIcon>
                    <FontIcon $size={7}>A</FontIcon>
                  </SmallColumn>
                </GroupBody>
                <GroupLabel>Quota</GroupLabel>
              </Group>
              <Group $w={97}>
                <GroupBody>
                  <Tool icon="zoomArea" w={36}>Ingrandisci<br />area</Tool>
                  <Tool icon="fit" w={20}>Adatta</Tool>
                  <Icons cols={3} cell={13} names={['lens', 'slab', 'frames', 'mapA', 'mapB', 'diamond', 'spin', 'note']} />
                </GroupBody>
                <GroupLabel>Orienta</GroupLabel>
              </Group>
              <Group $w={58} $pad={2}>
                <GroupBody>
                  <IconGrid $cols={3} $cell={18} $row={18}>
                    <ViewCell><Glyph name="viewA" size={11} /></ViewCell>
                    <ViewCell><Glyph name="viewB" size={11} /></ViewCell>
                    <ViewCell><Glyph name="viewB" size={11} /></ViewCell>
                    <ViewCell><Glyph name="cubeGold" size={12} /></ViewCell>
                    <ViewCell $active><Glyph name="cubeLine" size={12} /></ViewCell>
                  </IconGrid>
                </GroupBody>
              </Group>
              <Group $w={83}>
                <GroupBody>
                  <StyleColumn>
                    <StyleName><FontIcon $size={7}>A</FontIcon><StyleSwatch />Stili</StyleName>
                    <StyleSelect>▾</StyleSelect>
                  </StyleColumn>
                </GroupBody>
                <GroupLabel>Stile</GroupLabel>
              </Group>
              <Group $w={34}>
                <GroupBody>
                  <Tool icon="windows" w={33} off>Cambia<br />finestra ▾</Tool>
                </GroupBody>
                <GroupLabel>Finestra</GroupLabel>
              </Group>
            </Ribbon>
            <Main>
              <Rail>
                <Glyph name="railA" size={11} />
                <Glyph name="railB" size={11} />
                <Glyph name="railC" size={11} />
                <Glyph name="railD" size={11} />
                <Glyph name="railE" size={11} />
                <Glyph name="railF" size={11} />
                <Glyph name="railG" size={11} />
                <RailText>Simulazione</RailText>
              </Rail>
              <Workspace>
                <DocRow>
                  <DocTab>
                    <Glyph name="part" size={7} />
                    Parte2 ×
                  </DocTab>
                  <DocArrows><span>‹</span><span>›</span><span>×</span></DocArrows>
                </DocRow>
                <Viewport>
                  <TreeGrip>..........</TreeGrip>
                  <Tree>
                    <TreeRow $indent={0}>
                      <TreeLabel><Glyph name="part" size={6} />Parte2</TreeLabel>
                    </TreeRow>
                    <TreeRow $indent={18}>
                      <TreeBox />
                      <TreeLabel $muted><Glyph name="railA" size={6} />Origine</TreeLabel>
                    </TreeRow>
                    <TreeRow $indent={26}>
                      <TreeLabel><Glyph name="mapA" size={6} />Materiale (Acciaio galvanizzato)</TreeLabel>
                    </TreeRow>
                    <TreeRow $indent={8}>
                      <TreeBox>+</TreeBox>
                      <TreeBox>✓</TreeBox>
                      <TreeLabel><Glyph name="planeA" size={6} />Piani di riferimento di base</TreeLabel>
                    </TreeRow>
                    <TreeActive>Ordinato</TreeActive>
                  </Tree>
                  <CommandBar>
                    <CommandMain><Glyph name="revolve" size={15} /></CommandMain>
                    <CommandTool><Glyph name="plane3d" size={11} /></CommandTool>
                    <CommandTool><Glyph name="pencil" size={11} /></CommandTool>
                    <CommandTool><Glyph name="stair" size={11} /></CommandTool>
                    <CommandTool $hot><Glyph name="gauge" size={11} /></CommandTool>
                    <FinishButton>Finisci</FinishButton>
                    <CommandSep />
                    <CommandTool><Glyph name="rotA" size={12} /></CommandTool>
                    <CommandTool><Glyph name="rotB" size={12} /></CommandTool>
                    <CommandSep />
                    <CommandTool><Glyph name="axis" size={11} /></CommandTool>
                    <CommandSep />
                    <CommandTool><Glyph name="target" size={11} /></CommandTool>
                    <CommandTool><Glyph name="profile" size={11} /></CommandTool>
                    <CommandSep />
                    <FieldLabel>Angolo:</FieldLabel>
                    <FieldSelect><SelectedValue>293.89 °</SelectedValue><FieldArrow>▼</FieldArrow></FieldSelect>
                    <FieldLabel>Incremento:</FieldLabel>
                    <FieldSelect>0.00 °<FieldArrow>▼</FieldArrow></FieldSelect>
                  </CommandBar>
                  <Model />
                  <TriadSvg viewBox="0 0 42 40">
                    <path d="M1 9L32 0l10 27-29 12z" fill="#3a9cb0" opacity=".6" />
                    <path d="M13 39L1 9l20 8zM21 17l21 10" stroke="#2f8ca2" fill="none" />
                    <path d="M19 8v12M19 20h12" stroke="#3cb58a" strokeWidth=".8" />
                    <circle cx="19" cy="20" r="1.2" fill="#d8e05a" />
                  </TriadSvg>
                </Viewport>
              </Workspace>
            </Main>
            <PromptRow>
              <PromptName><Glyph name="prompt" size={11} />PromptBar</PromptName>
              <PromptInput>Fare clic per impostare l'angolo o immettere un valore.</PromptInput>
              <PromptTools>
                <span>A</span><span>A</span><span>±</span><span>▾</span><span>⇩</span><span>×</span>
              </PromptTools>
            </PromptRow>
            <StatusBar>
              <SearchField>Trova comando</SearchField>
              <Glyph name="arrow" size={8} />
              <StatusSpacer />
              <Glyph name="tinyBlue" size={8} />
              <Glyph name="tinyLens" size={8} />
              <Glyph name="tinyBlue" size={8} />
              <Glyph name="tinyBlue" size={8} />
              <Glyph name="tinyGreen" size={8} />
              <Glyph name="tinyGlobe" size={8} />
              <Glyph name="tinyGreen" size={8} />
              <Glyph name="tinyBox" size={8} />
              <Glyph name="minus" size={8} />
              <ZoomTrack><ZoomThumb /></ZoomTrack>
              <Glyph name="plus" size={8} />
              <Glyph name="red" size={9} />
              <Glyph name="green" size={9} />
            </StatusBar>
            <SevenBar>
              <SevenItem $w={30}><Glyph name="orb" size={18} /></SevenItem>
              <SevenItem $w={42}><Glyph name="ie" size={17} /></SevenItem>
              <SevenItem $w={26}><Glyph name="folder" size={17} /></SevenItem>
              <SevenItem $w={42}><Glyph name="media" size={15} /></SevenItem>
              <SevenItem $w={30}><Glyph name="chrome" size={17} /></SevenItem>
              <SevenItem $w={4} />
              <SevenItem $w={33} $active><Glyph name="appLogo" size={15} /></SevenItem>
              <SevenItem $w={36}><IdBadge>Id</IdBadge></SevenItem>
              <SevenTray>
                <TrayIcons>
                  <Glyph name="traySmall" size={8} />
                  <Glyph name="trayBlue" size={8} />
                  <Glyph name="traySound" size={6} />
                  <Glyph name="trayUsb" size={8} />
                  <Glyph name="trayOrange" size={8} />
                  <Glyph name="trayFlag" size={8} />
                  <Glyph name="traySound" size={8} />
                  <Glyph name="trayNet" size={8} />
                </TrayIcons>
                <SevenClock>17:06<br />01/09/2018</SevenClock>
                <ShowDesktop />
              </SevenTray>
            </SevenBar>
          </AppWindow>
          <ShareBanner>
            <span>Il tuo desktop è attualmente condiviso con punkain86@gmail.com</span>
            <ShareButton>Interrompi condivisione</ShareButton>
          </ShareBanner>
        </Desktop>
        <TenBar>
          <TenItem $w={29}><Glyph name="winLogo" size={11} /></TenItem>
          <TenItem $w={29}><Glyph name="ring" size={10} /></TenItem>
          <TenItem $w={29}><Glyph name="taskview" size={10} /></TenItem>
          <TenItem $w={30} $line><Glyph name="explorer" size={14} /></TenItem>
          <TenItem $w={29}><Glyph name="mail" size={14} /><MailBadge>5</MailBadge></TenItem>
          <TenItem $w={29} $line><Glyph name="chrome" size={14} /></TenItem>
          <TenItem $w={29} $line $active><Glyph name="gallery" size={13} /></TenItem>
          <TenItem $w={30} $line><Glyph name="obs" size={14} /></TenItem>
          <TenClock>17:06<br />01/09/2018</TenClock>
        </TenBar>
      </Screen>
    </>
  );
}

export default App;
